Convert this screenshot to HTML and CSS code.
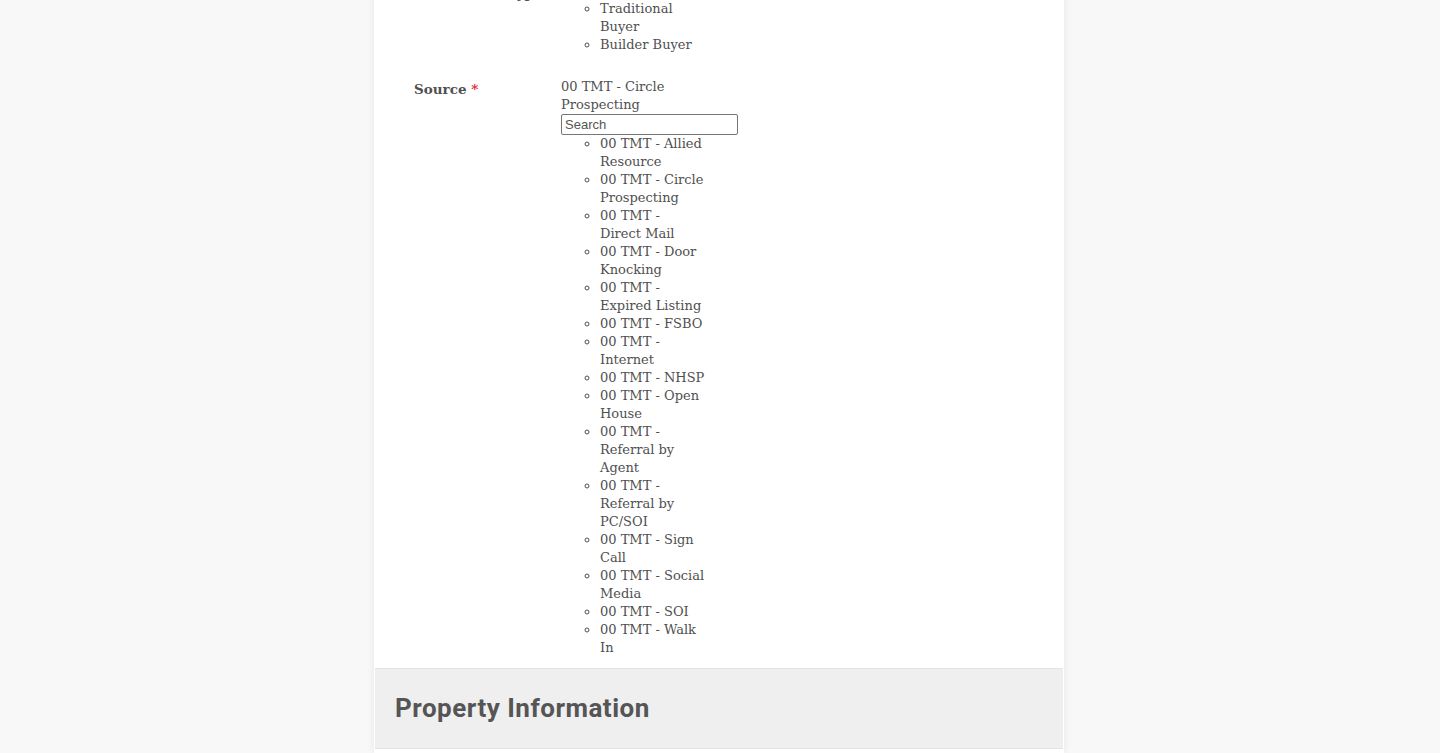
FILE: index.html
```html
<!DOCTYPE html>
<html lang="en">
<head>
<meta charset="utf-8">
<title>Lead Form</title>
<link rel="stylesheet" href="styles.css">
</head>
<body>
<main class="card">
  <div class="fields">
    <div class="row">
      <div class="label">Transaction Type</div>
      <div class="value">
        <ul class="options">
          <li>Investor</li>
          <li>Traditional Buyer</li>
          <li>Builder Buyer</li>
        </ul>
      </div>
    </div>
    <div class="row">
      <div class="label">Source <span class="req">*</span></div>
      <div class="value">
        <div class="selected">00 TMT - Circle Prospecting</div>
        <input class="search" type="text" placeholder="Search">
        <ul class="options">
          <li>00 TMT - Allied Resource</li>
          <li>00 TMT - Circle Prospecting</li>
          <li>00 TMT - Direct Mail</li>
          <li>00 TMT - Door Knocking</li>
          <li>00 TMT - Expired Listing</li>
          <li>00 TMT - FSBO</li>
          <li>00 TMT - Internet</li>
          <li>00 TMT - NHSP</li>
          <li>00 TMT - Open House</li>
          <li>00 TMT - Referral by Agent</li>
          <li>00 TMT - Referral by PC/SOI</li>
          <li>00 TMT - Sign Call</li>
          <li>00 TMT - Social Media</li>
          <li>00 TMT - SOI</li>
          <li>00 TMT - Walk In</li>
        </ul>
      </div>
    </div>
  </div>
  <section class="section-head">
    <h2>Property Information</h2>
  </section>
</main>
</body>
</html>
```
FILE: styles.css
```css
html, body {
  margin: 0;
  padding: 0;
}
body {
  background: #f8f8f8;
  color: #505050;
  font-family: "DejaVu Serif", "Liberation Serif", serif;
  font-size: 13px;
  line-height: 18px;
  height: 753px;
  overflow: hidden;
}
.card {
  width: 688px;
  margin: 0 auto;
  padding: 0 1px 4px;
  background: #fff;
  box-shadow: 0 0 8px rgba(0, 0, 0, 0.07);
  position: relative;
  left: -1px;
}
.fields {
  margin-top: -18px;
  padding: 0 0 11px 39px;
  display: flex;
  flex-direction: column;
  gap: 24px;
}
.row {
  display: grid;
  grid-template-columns: 147px 1fr;
}
.label {
  font-weight: bold;
  font-size: 13.5px;
  padding-top: 2px;
}
.req {
  color: #e8283a;
}
.value {
  width: 112px;
}
.selected {
  width: 112px;
}
.search {
  display: block;
  box-sizing: border-box;
  width: 177px;
  height: 21px;
  margin: 0;
  padding: 1px 3px;
  border: 1px solid #767676;
  border-radius: 2px;
  font-family: "Liberation Sans", Arial, sans-serif;
  font-size: 13px;
  color: #333;
  background: #fff;
}
.search::placeholder {
  color: #555;
}
.options {
  margin: 0;
  padding-left: 39px;
  list-style: circle;
}
.options li {
  width: 104.5px;
}
.section-head {
  background: #efefef;
  border-top: 1px solid #e3e3e3;
  border-bottom: 1px solid #e3e3e3;
  padding: 20px 20px;
}
.section-head h2 {
  margin: 0;
  font-family: Roboto, "Liberation Sans", sans-serif;
  font-weight: bold;
  font-size: 26px;
  letter-spacing: 0.5px;
  line-height: 39px;
  color: #555;
}
```
